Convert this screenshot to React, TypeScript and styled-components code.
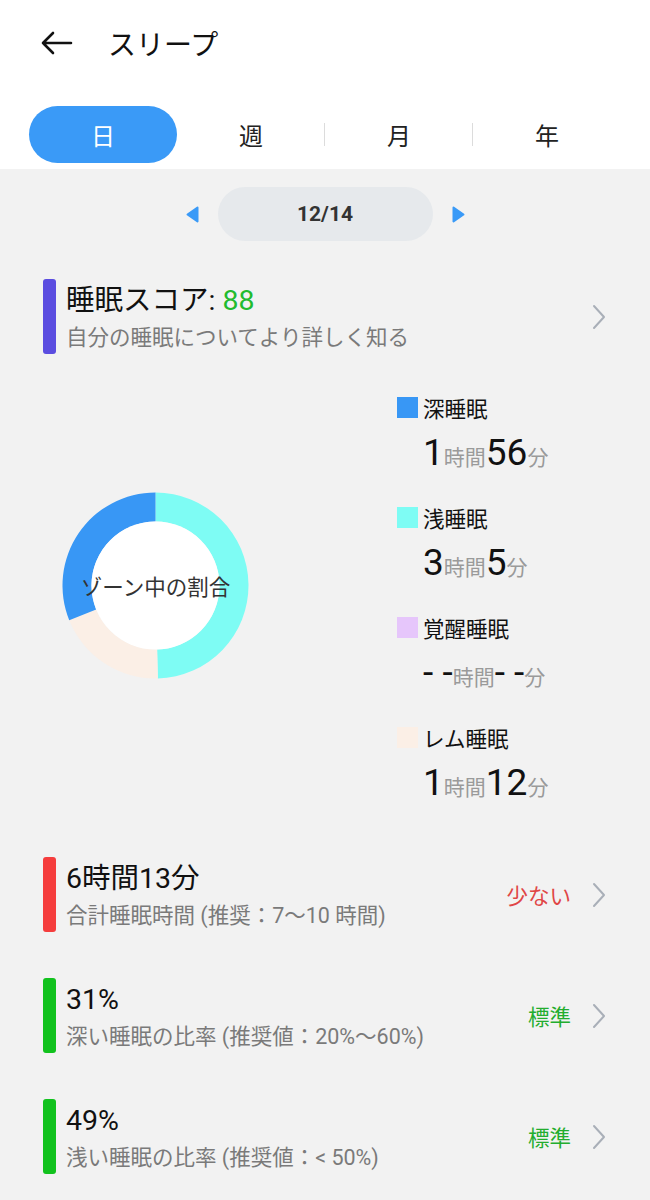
import React from "react";
import styled, { createGlobalStyle } from "styled-components";

const GlobalStyle = createGlobalStyle`
  html, body {
    margin: 0;
    padding: 0;
    background: #f2f2f2;
  }
  body {
    font-family: Roboto, "Noto Sans CJK JP", sans-serif;
    color: #111;
  }
`;

const Page = styled.div`
  width: 650px;
  min-height: 1200px;
  background: #f2f2f2;
  padding-bottom: 24px;
`;

const Header = styled.div`
  background: #ffffff;
  padding-bottom: 6px;
`;

const TitleRow = styled.div`
  height: 86px;
  display: flex;
  align-items: center;
  padding-left: 40px;
  gap: 35px;
`;

const Title = styled.div`
  font-size: 28px;
  color: #111;
`;

const Tabs = styled.div`
  margin-top: 20px;
  padding: 0 29px;
  display: flex;
`;

const Tab = styled.div<{ $active?: boolean; $sep?: boolean }>`
  width: 148px;
  height: 57px;
  display: flex;
  align-items: center;
  justify-content: center;
  font-size: 24px;
  border-radius: 29px;
  position: relative;
  background: ${(p) => (p.$active ? "#3a9af7" : "transparent")};
  color: ${(p) => (p.$active ? "#ffffff" : "#222")};
  &::before {
    content: "";
    display: ${(p) => (p.$sep ? "block" : "none")};
    position: absolute;
    left: -1px;
    top: 17px;
    height: 23px;
    width: 1px;
    background: #dcdcdc;
  }
`;

const DateNav = styled.div`
  margin-top: 18px;
  display: flex;
  align-items: center;
  justify-content: center;
  gap: 19px;
`;

const DatePill = styled.div`
  width: 215px;
  height: 54px;
  border-radius: 27px;
  background: #e6e9ec;
  display: flex;
  align-items: center;
  justify-content: center;
  font-size: 21px;
  font-weight: 700;
  color: #333;
`;

const InfoRow = styled.div<{ $top: number }>`
  margin-top: ${(p) => p.$top}px;
  padding: 0 44px 0 43px;
  display: flex;
  align-items: center;
`;

const Bar = styled.div<{ $color: string }>`
  width: 13px;
  height: 75px;
  border-radius: 3px;
  background: ${(p) => p.$color};
  flex-shrink: 0;
`;

const InfoText = styled.div`
  margin-left: 10px;
  flex: 1;
  padding-top: 4px;
  align-self: flex-start;
`;

const InfoTitle = styled.div`
  font-size: 28.5px;
  line-height: 36px;
  color: #111;
  white-space: nowrap;
`;

const Score = styled.span`
  color: #22bb2e;
`;

const InfoSub = styled.div`
  margin-top: 5px;
  font-size: 21.5px;
  line-height: 28px;
  color: #7a7a7a;
  white-space: nowrap;
`;

const Status = styled.div<{ $color: string }>`
  font-size: 21.5px;
  color: ${(p) => p.$color};
  margin-right: 21px;
`;

const ChartSection = styled.div`
  margin-top: 41px;
  padding-left: 62px;
  display: flex;
  gap: 148px;
`;

const Donut = styled.div`
  margin-top: 97px;
  width: 187px;
  height: 187px;
  display: grid;
  place-items: center;
  & > * {
    grid-area: 1 / 1;
  }
`;

const DonutLabel = styled.div`
  font-size: 21.5px;
  color: #333;
  white-space: nowrap;
`;

const Legend = styled.div`
  display: flex;
  flex-direction: column;
  gap: 30px;
`;

const LegendItem = styled.div``;

const LegendLabel = styled.div`
  height: 25px;
  display: flex;
  align-items: center;
  gap: 5px;
  font-size: 21.5px;
  color: #111;
`;

const Swatch = styled.div<{ $color: string }>`
  width: 21px;
  height: 21px;
  background: ${(p) => p.$color};
`;

const LegendValue = styled.div`
  margin-top: 11px;
  padding-left: 26px;
  height: 44px;
  display: flex;
  align-items: baseline;
  line-height: 44px;
`;

const Big = styled.span`
  font-size: 37px;
  color: #111;
`;

const Unit = styled.span`
  font-size: 21px;
  color: #9a9a9a;
`;

const BackIcon = () => (
  <svg width="33" height="24" viewBox="0 0 33 24">
    <path
      d="M31 12H3M13 2L3 12L13 22"
      fill="none"
      stroke="#111"
      strokeWidth="2.6"
      strokeLinecap="round"
      strokeLinejoin="round"
    />
  </svg>
);

const Triangle = ({ dir }: { dir: "left" | "right" }) => (
  <svg width="13" height="17" viewBox="0 0 13 17">
    <path
      d={dir === "left" ? "M11.5 1.5L1.5 8.5L11.5 15.5Z" : "M1.5 1.5L11.5 8.5L1.5 15.5Z"}
      fill="#3a9af7"
      stroke="#3a9af7"
      strokeWidth="2"
      strokeLinejoin="round"
    />
  </svg>
);

const Chevron = () => (
  <svg width="14" height="26" viewBox="0 0 14 26">
    <polyline
      points="2,2 12,13 2,24"
      fill="none"
      stroke="#a9afb8"
      strokeWidth="2"
      strokeLinecap="round"
      strokeLinejoin="round"
    />
  </svg>
);

const sector = (cx: number, cy: number, ro: number, ri: number, a0: number, a1: number) => {
  const pt = (r: number, a: number) => {
    const rad = (a * Math.PI) / 180;
    return `${cx + r * Math.sin(rad)} ${cy - r * Math.cos(rad)}`;
  };
  const large = a1 - a0 > 180 ? 1 : 0;
  return `M${pt(ro, a0)} A${ro} ${ro} 0 ${large} 1 ${pt(ro, a1)} L${pt(ri, a1)} A${ri} ${ri} 0 ${large} 0 ${pt(ri, a0)} Z`;
};

const segments = [
  { min: 185, color: "#7efcf4" },
  { min: 72, color: "#fbefe6" },
  { min: 0, color: "#e6c6fb" },
  { min: 116, color: "#3897f5" },
];

const DonutChart = () => {
  const total = segments.reduce((s, x) => s + x.min, 0);
  let start = 0;
  return (
    <svg width="187" height="187" viewBox="0 0 187 187">
      {segments.map((s, i) => {
        const sweep = (s.min / total) * 360;
        const a0 = start;
        start += sweep;
        if (sweep <= 0) return null;
        return <path key={i} d={sector(93.5, 93.5, 93, 64, a0, a0 + sweep)} fill={s.color} />;
      })}
      <circle cx="93.5" cy="93.5" r="64" fill="#ffffff" />
    </svg>
  );
};

const legend = [
  { label: "深睡眠", color: "#3897f5", h: "1", m: "56" },
  { label: "浅睡眠", color: "#7efcf4", h: "3", m: "5" },
  { label: "覚醒睡眠", color: "#e6c6fb", h: "- -", m: "- -" },
  { label: "レム睡眠", color: "#fbefe6", h: "1", m: "12" },
];

const rows = [
  { top: 52, color: "#f53d3d", title: "6時間13分", sub: "合計睡眠時間 (推奨：7〜10 時間)", status: "少ない", statusColor: "#e04646" },
  { top: 46, color: "#12c21e", title: "31%", sub: "深い睡眠の比率 (推奨値：20%〜60%)", status: "標準", statusColor: "#22ad2e" },
  { top: 46, color: "#12c21e", title: "49%", sub: "浅い睡眠の比率 (推奨値：< 50%)", status: "標準", statusColor: "#22ad2e" },
];

export default function App() {
  return (
    <Page>
      <GlobalStyle />
      <Header>
        <TitleRow>
          <BackIcon />
          <Title>スリープ</Title>
        </TitleRow>
        <Tabs>
          <Tab $active>日</Tab>
          <Tab>週</Tab>
          <Tab $sep>月</Tab>
          <Tab $sep>年</Tab>
        </Tabs>
      </Header>

      <DateNav>
        <Triangle dir="left" />
        <DatePill>12/14</DatePill>
        <Triangle dir="right" />
      </DateNav>

      <InfoRow $top={38}>
        <Bar $color="#5b4de0" />
        <InfoText>
          <InfoTitle>
            睡眠スコア: <Score>88</Score>
          </InfoTitle>
          <InfoSub>自分の睡眠についてより詳しく知る</InfoSub>
        </InfoText>
        <Chevron />
      </InfoRow>

      <ChartSection>
        <Donut>
          <DonutChart />
          <DonutLabel>ゾーン中の割合</DonutLabel>
        </Donut>
        <Legend>
          {legend.map((l) => (
            <LegendItem key={l.label}>
              <LegendLabel>
                <Swatch $color={l.color} />
                {l.label}
              </LegendLabel>
              <LegendValue>
                <Big>{l.h}</Big>
                <Unit>時間</Unit>
                <Big>{l.m}</Big>
                <Unit>分</Unit>
              </LegendValue>
            </LegendItem>
          ))}
        </Legend>
      </ChartSection>

      {rows.map((r, i) => (
        <InfoRow key={i} $top={r.top}>
          <Bar $color={r.color} />
          <InfoText>
            <InfoTitle>{r.title}</InfoTitle>
            <InfoSub>{r.sub}</InfoSub>
          </InfoText>
          <Status $color={r.statusColor}>{r.status}</Status>
          <Chevron />
        </InfoRow>
      ))}
    </Page>
  );
}
